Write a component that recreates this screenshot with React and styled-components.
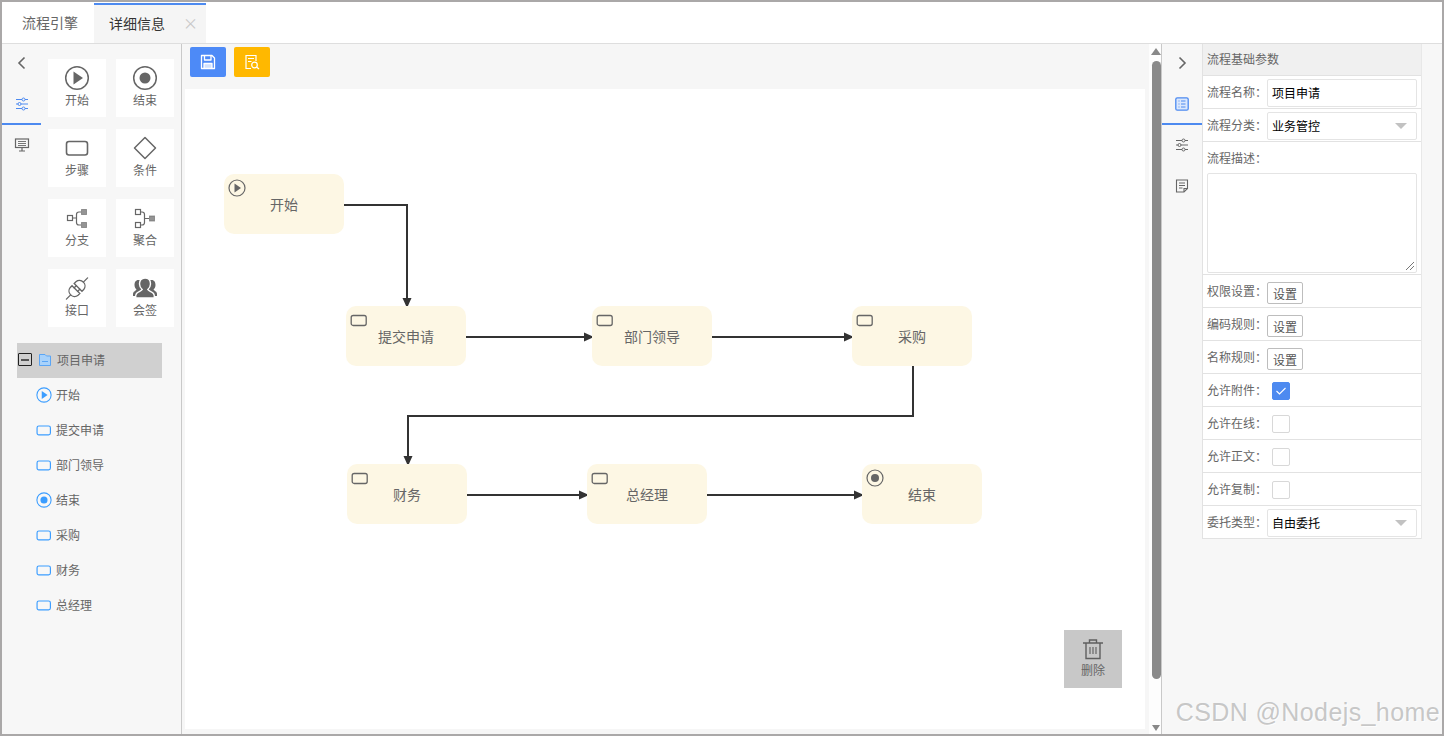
import React from "react";
import styled, { createGlobalStyle } from "styled-components";

const GlobalStyle = createGlobalStyle`
  html, body { margin: 0; padding: 0; background: #fff; }
  body { font-family: "Noto Sans CJK SC", "Liberation Sans", sans-serif; font-size: 12px; color: #666; }
  * { box-sizing: border-box; }
`;

const Frame = styled.div`
  position: relative;
  width: 1444px;
  height: 736px;
  border: 2px solid #aaa8a8;
  display: flex;
  flex-direction: column;
  overflow: hidden;
`;

const TabBar = styled.div`
  height: 42px;
  flex: none;
  display: flex;
  background: #fff;
  border-bottom: 1px solid #dedede;
`;

const Tab = styled.div`
  height: ${(p) => (p.$active ? "40px" : "41px")};
  display: flex;
  align-items: center;
  font-size: 14px;
  white-space: nowrap;
  padding: ${(p) => (p.$active ? "0 0 3px 15px" : "0 0 3px 20px")};
  margin-right: ${(p) => (p.$active ? 0 : "1px")};
  width: ${(p) => (p.$active ? "112px" : "91px")};
  color: ${(p) => (p.$active ? "#333" : "#666")};
  background: ${(p) => (p.$active ? "#f5f5f5" : "#fff")};
  border-top: 2px solid ${(p) => (p.$active ? "#4d8af0" : "transparent")};
  margin-top: ${(p) => (p.$active ? "1px" : 0)};
`;

const TabClose = styled.span`
  margin-left: 18px;
  color: #c8c8c8;
  font-size: 15px;
  line-height: 1;
`;

const Body = styled.div`
  flex: 1;
  display: flex;
  min-height: 0;
`;

const LeftPanel = styled.aside`
  width: 180px;
  flex: none;
  background: #f7f7f7;
  border-right: 1px solid #c9c9c9;
`;

const LeftTop = styled.div`
  display: flex;
  height: 283px;
`;

const IconColumn = styled.div`
  width: ${(p) => p.$width};
  flex: none;
  display: flex;
  flex-direction: column;
`;

const IconTab = styled.div`
  height: 41px;
  flex: none;
  display: flex;
  align-items: center;
  justify-content: center;
  color: ${(p) => (p.$active ? "#4d8af0" : "#666")};
  border-bottom: 2px solid ${(p) => (p.$active ? "#4d8af0" : "transparent")};
`;

const BackTab = styled(IconTab)`
  height: 40px;
  border-bottom: 0;
  padding-bottom: 2px;
`;

const Palette = styled.div`
  display: grid;
  grid-template-columns: 58px 58px;
  grid-auto-rows: 58px;
  column-gap: 10px;
  row-gap: 12px;
  padding: 15px 0 0 7px;
`;

const PaletteCard = styled.div`
  background: #fff;
  display: flex;
  flex-direction: column;
  align-items: center;
  color: #666;
  padding-top: 6px;
  line-height: 16px;
  svg { display: block; height: 26px; margin-bottom: 1px; }
`;

const Tree = styled.div`
  margin: 16px 0 0 15px;
`;

const TreeRoot = styled.div`
  width: 145px;
  height: 35px;
  background: #d0d0d0;
  display: flex;
  align-items: center;
  padding: 0 0 2px 1px;
  color: #666;
`;

const Collapse = styled.span`
  width: 14px;
  height: 13px;
  border: 1.5px solid #222;
  border-radius: 1px;
  display: flex;
  align-items: center;
  justify-content: center;
  margin-right: 7px;
  &::before {
    content: "";
    width: 8px;
    height: 2px;
    background: #555;
  }
`;

const TreeItem = styled.div`
  height: 35px;
  display: flex;
  align-items: center;
  padding: 0 0 2px 19px;
  color: #666;
`;

const Center = styled.main`
  flex: 1;
  min-width: 0;
  background: #f6f6f6;
  display: flex;
  flex-direction: column;
  padding: 0 4px 5px 3px;
`;

const Toolbar = styled.div`
  height: 45px;
  flex: none;
  display: flex;
  gap: 8px;
  padding: 3px 0 0 5px;
`;

const ToolButton = styled.div`
  width: 36px;
  height: 30px;
  border-radius: 2px;
  background: ${(p) => p.$bg};
  display: flex;
  align-items: center;
  justify-content: center;
`;

const Canvas = styled.div`
  position: relative;
  flex: 1;
  background: #fff;
`;

const Wires = styled.svg`
  position: absolute;
  inset: 0;
  width: 100%;
  height: 100%;
`;

const Node = styled.div`
  position: absolute;
  left: ${(p) => p.$x - 185}px;
  top: ${(p) => p.$y - 89}px;
  width: 120px;
  height: 60px;
  border-radius: 10px;
  background: #fdf7e4;
  font-size: 14px;
  color: #666;
  display: flex;
  align-items: center;
  justify-content: center;
`;

const NodeIcon = styled.span`
  position: absolute;
  left: 4px;
  top: 5px;
  line-height: 0;
`;

const DeleteButton = styled.div`
  position: absolute;
  right: 23px;
  bottom: 41px;
  width: 58px;
  height: 58px;
  background: #c8c8c8;
  display: flex;
  flex-direction: column;
  align-items: center;
  padding-top: 8px;
  color: #666;
  line-height: 16px;
  svg { margin-bottom: 2px; color: #5f5f5f; }
`;

const ScrollBar = styled.div`
  width: 13px;
  flex: none;
  background: #fdfdfd;
  display: flex;
  flex-direction: column;
  align-items: center;
  padding: 4px 0 0 2px;
  border-right: 1px solid #c9c9c9;
`;

const ArrowUp = styled.span`
  width: 0;
  height: 0;
  border: 5px solid transparent;
  border-top: 0;
  border-bottom: 7px solid #888;
`;

const ArrowDown = styled.span`
  width: 0;
  height: 0;
  border: 4.5px solid transparent;
  border-bottom: 0;
  border-top: 6px solid #888;
`;

const Thumb = styled.div`
  width: 9px;
  height: 618px;
  margin: 6px 0 46px;
  border-radius: 5px;
  background: #8a8a8a;
`;

const RightPanel = styled.aside`
  width: 280px;
  flex: none;
  background: #f7f7f7;
  display: flex;
`;

const Form = styled.div`
  width: 220px;
  flex: none;
  border-left: 1px solid #e2e2e2;
  border-right: 1px solid #e8e8e8;
  align-self: flex-start;
`;

const FormHead = styled.div`
  height: 32px;
  background: #f0f0f0;
  display: flex;
  align-items: center;
  padding: 0 0 2px 4px;
  color: #666;
  border-bottom: 1px solid #e2e2e2;
`;

const FormRow = styled.div`
  height: 33px;
  background: #fff;
  border-bottom: 1px solid #e2e2e2;
  display: flex;
  align-items: center;
  padding-left: 4px;
`;

const FormBlock = styled.div`
  height: 133px;
  background: #fff;
  border-bottom: 1px solid #e2e2e2;
  padding: 7px 4px 0;
`;

const Label = styled.label`
  width: 60px;
  flex: none;
  color: #666;
  line-height: 18px;
  display: block;
`;

const TextField = styled.div`
  width: 150px;
  height: 28px;
  margin-top: 2px;
  border: 1px solid #e4e4e4;
  border-radius: 2px;
  background: #fff;
  color: #000;
  display: flex;
  align-items: center;
  padding: 0 0 1px 4px;
  position: relative;
`;

const Caret = styled.span`
  position: absolute;
  right: 9px;
  top: 10px;
  border: 6px solid transparent;
  border-bottom: 0;
  border-top: 6px solid #c2c2c2;
`;

const TextArea = styled.div`
  position: relative;
  width: 210px;
  height: 100px;
  margin-top: 6px;
  border: 1px solid #e4e4e4;
  border-radius: 2px;
  background: #fff;
`;

const Resize = styled.svg`
  position: absolute;
  right: 1px;
  bottom: 1px;
`;

const SetButton = styled.div`
  width: 36px;
  height: 22px;
  margin-top: 4px;
  border: 1px solid #bdbdbd;
  border-radius: 2px;
  background: #fff;
  color: #555;
  display: flex;
  align-items: center;
  justify-content: center;
`;

const Check = styled.span`
  width: 18px;
  height: 18px;
  margin: 2px 0 0 5px;
  border-radius: 2px;
  border: 1px solid ${(p) => (p.$on ? "#4d8af0" : "#d8d8d8")};
  background: ${(p) => (p.$on ? "#4d8af0" : "#fff")};
  display: flex;
  align-items: center;
  justify-content: center;
`;

const Watermark = styled.div`
  position: absolute;
  right: 2px;
  bottom: 7px;
  font-family: "Liberation Sans", Arial, sans-serif;
  font-size: 25px;
  line-height: 30px;
  letter-spacing: 0.4px;
  color: rgba(185, 185, 185, 0.8);
  text-shadow: 1px 1px 1px rgba(255, 255, 255, 0.8);
  white-space: nowrap;
`;

const Svg = ({ size = 26, w, h, children, ...rest }) => (
  <svg
    width={w || size}
    height={h || size}
    viewBox={`0 0 ${w || size} ${h || size}`}
    fill="none"
    stroke="currentColor"
    {...rest}
  >
    {children}
  </svg>
);

const PlayIcon = () => (
  <Svg size={26}>
    <circle cx="13" cy="13" r="11.3" strokeWidth="1.5" />
    <path d="M9.5 6.5 L19 13 L9.5 19.5 Z" fill="currentColor" stroke="none" />
  </Svg>
);

const StopIcon = () => (
  <Svg size={26}>
    <circle cx="13" cy="13" r="11.3" strokeWidth="1.5" />
    <circle cx="13" cy="13" r="5.5" fill="currentColor" stroke="none" />
  </Svg>
);

const StepIcon = () => (
  <Svg w={24} h={26}>
    <rect x="1.5" y="6.5" width="21" height="13.5" rx="2.5" strokeWidth="1.6" />
  </Svg>
);

const DiamondIcon = () => (
  <Svg size={26}>
    <path d="M13 2.5 L23.5 13 L13 23.5 L2.5 13 Z" strokeWidth="1.5" strokeLinejoin="round" />
  </Svg>
);

const BranchIcon = () => (
  <Svg size={26}>
    <rect x="3.5" y="10.5" width="5" height="5" strokeWidth="1.2" />
    <path d="M8.5 13 H12 M17 7 H15 Q12.5 7 12.5 9.5 V17.5 Q12.5 20 15 20 H17" strokeWidth="1.2" />
    <rect x="17.5" y="4.5" width="5" height="5" fill="currentColor" fillOpacity="0.7" strokeWidth="1" strokeOpacity="0.6" />
    <rect x="17.5" y="17.5" width="5" height="5" fill="currentColor" fillOpacity="0.7" strokeWidth="1" strokeOpacity="0.6" />
  </Svg>
);

const MergeIcon = () => (
  <Svg size={26}>
    <rect x="3.5" y="4.5" width="5" height="5" strokeWidth="1.2" />
    <rect x="3.5" y="17.5" width="5" height="5" strokeWidth="1.2" />
    <path d="M8.5 7 H10 Q12.5 7 12.5 9.5 V17.5 Q12.5 20 10 20 H8.5 M12.5 13.5 H17" strokeWidth="1.2" />
    <rect x="17.5" y="11" width="5" height="5" fill="currentColor" fillOpacity="0.7" strokeWidth="1" strokeOpacity="0.6" />
  </Svg>
);

const PlugIcon = () => (
  <Svg size={26}>
    <g transform="translate(13 13.5) rotate(-45)" strokeWidth="1.3" strokeLinecap="round">
      <path d="M-15 0 H-9" />
      <path d="M-1.5 -5.5 V5.5 H-4 A5.5 5.5 0 0 1 -9 0 A5.5 5.5 0 0 1 -4 -5.5 Z" />
      <path d="M1.5 -5.5 V5.5 H4 A5.5 5.5 0 0 0 9 0 A5.5 5.5 0 0 0 4 -5.5 Z" />
      <path d="M-1.5 -2.5 H1.5 M-1.5 2.5 H1.5" />
      <path d="M9 0 H15" />
    </g>
  </Svg>
);

const UsersIcon = () => (
  <Svg size={26}>
    <path
      d="M6.5 5 C3.5 5 2.5 7.5 2.5 10 C2.5 12 3.5 13.5 4.5 14.5 C3.5 16 1 16.5 1 19 V21 H25 V19 C25 16.5 22.5 16 21.5 14.5 C22.5 13.5 23.5 12 23.5 10 C23.5 7.5 22.5 5 19.5 5 Z"
      fill="currentColor"
      stroke="none"
    />
    <path
      d="M13 3 C17 3 18.5 6 18.5 9 C18.5 11.5 17 13.5 15.8 14.5 C16.5 16 20 16.5 21.5 18.5 C22.5 19.8 22.5 21 22.3 23 H3.7 C3.5 21 3.5 19.8 4.5 18.5 C6 16.5 9.5 16 10.2 14.5 C9 13.5 7.5 11.5 7.5 9 C7.5 6 9 3 13 3 Z"
      fill="currentColor"
      stroke="#fff"
      strokeWidth="1.4"
    />
  </Svg>
);

const SlidersIcon = () => (
  <Svg size={14}>
    <g strokeWidth="1">
      <path d="M1 2.5 H7 M10 2.5 H13 M1 7 H3 M6 7 H13 M1 11.5 H7 M10 11.5 H13" />
      <circle cx="8.5" cy="2.5" r="1.5" />
      <circle cx="4.5" cy="7" r="1.5" />
      <circle cx="8.5" cy="11.5" r="1.5" />
    </g>
  </Svg>
);

const MonitorIcon = () => (
  <Svg size={16}>
    <g strokeWidth="1.2">
      <rect x="1.5" y="2" width="13" height="8.5" />
      <path d="M4 4.5 H12 M4 6.5 H12 M4 8.5 H12" strokeWidth="0.9" />
      <path d="M8 10.5 V13.5 M5 14 H11" />
    </g>
  </Svg>
);

const ChevronLeft = () => (
  <Svg w={10} h={14}>
    <path d="M7.5 1.5 L2 7 L7.5 12.5" strokeWidth="1.6" />
  </Svg>
);

const ChevronRight = () => (
  <Svg w={10} h={14}>
    <path d="M2.5 1.5 L8 7 L2.5 12.5" strokeWidth="1.6" />
  </Svg>
);

const ListIcon = () => (
  <Svg size={14}>
    <rect x="0.8" y="0.8" width="12.4" height="12.4" rx="1.5" strokeWidth="1.3" fill="#dbe8fd" />
    <path d="M3.5 4 H4.5 M6 4 H10.5 M3.5 7 H4.5 M6 7 H10.5 M3.5 10 H4.5 M6 10 H10.5" strokeWidth="1" />
  </Svg>
);

const NoteIcon = () => (
  <Svg size={14}>
    <g strokeWidth="1.1">
      <path d="M1.5 1 H12.5 V9.5 L9 13 H1.5 Z" />
      <path d="M12.5 9.5 H9 V13" />
      <path d="M4 4 H10 M4 6.5 H10 M4 9 H7.5" />
    </g>
  </Svg>
);

const SaveIcon = () => (
  <Svg size={16} color="#fff">
    <g strokeWidth="1.3" strokeLinejoin="round">
      <path d="M1.5 1.5 H12 L14.5 4 V14.5 H1.5 Z" />
      <path d="M4.5 1.5 V6 H11 V1.5" />
      <path d="M4 14.5 V9.5 H12 V14.5" fill="#fff" fillOpacity="0.75" />
    </g>
  </Svg>
);

const PreviewIcon = () => (
  <Svg size={16} color="#fff">
    <g strokeWidth="1.2">
      <path d="M12 7 V1.5 H2 V14.5 H7" />
      <path d="M4 4.5 H10 M4 7.5 H7.5" />
      <circle cx="10.5" cy="11" r="2.8" />
      <path d="M12.5 13 L15 15" />
    </g>
  </Svg>
);

const TrashIcon = () => (
  <Svg w={22} h={22}>
    <g strokeWidth="1.4">
      <path d="M1 5 H21 M7.5 5 V2 H14.5 V5" />
      <path d="M4 5 V20.5 H18 V5" />
      <path d="M8 9 V16 M11 9 V16 M14 9 V16" strokeWidth="1.1" />
    </g>
  </Svg>
);

const FolderIcon = () => (
  <Svg size={12} color="#5aa5f5">
    <path d="M0.5 0.5 H6 L7.5 2 H11.5 V11.5 H0.5 Z" fill="#a9d2fa" strokeWidth="1" />
    <path d="M3 7.5 H9" strokeWidth="1" />
  </Svg>
);

const SmallPlay = () => (
  <Svg size={18}>
    <circle cx="9" cy="9" r="8" strokeWidth="1.2" />
    <path d="M6.5 4.5 L13 9 L6.5 13.5 Z" fill="currentColor" stroke="none" />
  </Svg>
);

const SmallStop = () => (
  <Svg size={18}>
    <circle cx="9" cy="9" r="8" strokeWidth="1.2" />
    <circle cx="9" cy="9" r="4" fill="currentColor" stroke="none" />
  </Svg>
);

const SmallRect = () => (
  <Svg size={18}>
    <rect x="1.2" y="4.5" width="15" height="10" rx="2" strokeWidth="1.3" />
  </Svg>
);

const TreeIcon = styled.span`
  color: #3b9dff;
  line-height: 0;
  margin: 1px 4px 0 0;
  display: flex;
  svg { width: 16px; height: 16px; }
`;

const FolderWrap = styled.span`
  line-height: 0;
  margin-right: 6px;
  display: flex;
`;

const palette = [
  ["开始", <PlayIcon />],
  ["结束", <StopIcon />],
  ["步骤", <StepIcon />],
  ["条件", <DiamondIcon />],
  ["分支", <BranchIcon />],
  ["聚合", <MergeIcon />],
  ["接口", <PlugIcon />],
  ["会签", <UsersIcon />],
];

const treeItems = [
  ["开始", "play"],
  ["提交申请", "rect"],
  ["部门领导", "rect"],
  ["结束", "stop"],
  ["采购", "rect"],
  ["财务", "rect"],
  ["总经理", "rect"],
];

const nodes = [
  { x: 224, y: 174, text: "开始", kind: "play" },
  { x: 346, y: 306, text: "提交申请", kind: "rect" },
  { x: 592, y: 306, text: "部门领导", kind: "rect" },
  { x: 852, y: 306, text: "采购", kind: "rect" },
  { x: 347, y: 464, text: "财务", kind: "rect" },
  { x: 587, y: 464, text: "总经理", kind: "rect" },
  { x: 862, y: 464, text: "结束", kind: "stop" },
];

// page coordinates, shifted by the canvas origin below
const wires = [
  "M344 205 H407 V308",
  "M466 337 H594",
  "M712 337 H854",
  "M913 366 V416 H408 V466",
  "M467 495 H589",
  "M707 495 H864",
];

const kindIcon = (kind) => {
  if (kind === "play") return <SmallPlay />;
  if (kind === "stop") return <SmallStop />;
  return <SmallRect />;
};

const settings = ["权限设置：", "编码规则：", "名称规则："];
const checks = [
  ["允许附件：", true],
  ["允许在线：", false],
  ["允许正文：", false],
  ["允许复制：", false],
];

export default function App() {
  return (
    <>
      <GlobalStyle />
      <Frame>
        <TabBar>
          <Tab>流程引擎</Tab>
          <Tab $active>
            详细信息<TabClose>×</TabClose>
          </Tab>
        </TabBar>
        <Body>
          <LeftPanel>
            <LeftTop>
              <IconColumn $width="39px">
                <BackTab><ChevronLeft /></BackTab>
                <IconTab $active><SlidersIcon /></IconTab>
                <IconTab><MonitorIcon /></IconTab>
              </IconColumn>
              <Palette>
                {palette.map(([label, icon]) => (
                  <PaletteCard key={label}>
                    {icon}
                    {label}
                  </PaletteCard>
                ))}
              </Palette>
            </LeftTop>
            <Tree>
              <TreeRoot>
                <Collapse />
                <FolderWrap><FolderIcon /></FolderWrap>
                项目申请
              </TreeRoot>
              {treeItems.map(([label, kind], i) => (
                <TreeItem key={i}>
                  <TreeIcon>{kindIcon(kind)}</TreeIcon>
                  {label}
                </TreeItem>
              ))}
            </Tree>
          </LeftPanel>
          <Center>
            <Toolbar>
              <ToolButton $bg="#4d8af7"><SaveIcon /></ToolButton>
              <ToolButton $bg="#ffb800"><PreviewIcon /></ToolButton>
            </Toolbar>
            <Canvas>
              <Wires>
                <defs>
                  <marker id="arrow" markerUnits="userSpaceOnUse" markerWidth="12" markerHeight="12" refX="10" refY="5" orient="auto">
                    <path d="M0 0.5 L10 5 L0 9.5 Z" fill="#333" />
                  </marker>
                </defs>
                <g transform="translate(-185 -89)" fill="none" stroke="#333" strokeWidth="2">
                  {wires.map((d) => (
                    <path key={d} d={d} markerEnd="url(#arrow)" />
                  ))}
                </g>
              </Wires>
              {nodes.map((n) => (
                <Node key={n.text + n.x} $x={n.x} $y={n.y}>
                  <NodeIcon>{kindIcon(n.kind)}</NodeIcon>
                  {n.text}
                </Node>
              ))}
              <DeleteButton>
                <TrashIcon />
                删除
              </DeleteButton>
            </Canvas>
          </Center>
          <ScrollBar>
            <ArrowUp />
            <Thumb />
            <ArrowDown />
          </ScrollBar>
          <RightPanel>
            <IconColumn $width="40px">
              <BackTab><ChevronRight /></BackTab>
              <IconTab $active><ListIcon /></IconTab>
              <IconTab><SlidersIcon /></IconTab>
              <IconTab><NoteIcon /></IconTab>
            </IconColumn>
            <Form>
              <FormHead>流程基础参数</FormHead>
              <FormRow>
                <Label>流程名称：</Label>
                <TextField>项目申请</TextField>
              </FormRow>
              <FormRow>
                <Label>流程分类：</Label>
                <TextField>业务管控<Caret /></TextField>
              </FormRow>
              <FormBlock>
                <Label>流程描述：</Label>
                <TextArea>
                  <Resize width="10" height="10" viewBox="0 0 10 10" stroke="#777" fill="none">
                    <path d="M1 9 L9 1 M5 9 L9 5" />
                  </Resize>
                </TextArea>
              </FormBlock>
              {settings.map((label) => (
                <FormRow key={label}>
                  <Label>{label}</Label>
                  <SetButton>设置</SetButton>
                </FormRow>
              ))}
              {checks.map(([label, on]) => (
                <FormRow key={label}>
                  <Label>{label}</Label>
                  <Check $on={on}>
                    {on && (
                      <svg width="12" height="10" viewBox="0 0 12 10" fill="none" stroke="#fff" strokeWidth="1.1">
                        <path d="M1.5 5 L4.5 8 L10.5 2" />
                      </svg>
                    )}
                  </Check>
                </FormRow>
              ))}
              <FormRow>
                <Label>委托类型：</Label>
                <TextField>自由委托<Caret /></TextField>
              </FormRow>
            </Form>
          </RightPanel>
        </Body>
        <Watermark>CSDN @Nodejs_home</Watermark>
      </Frame>
    </>
  );
}
